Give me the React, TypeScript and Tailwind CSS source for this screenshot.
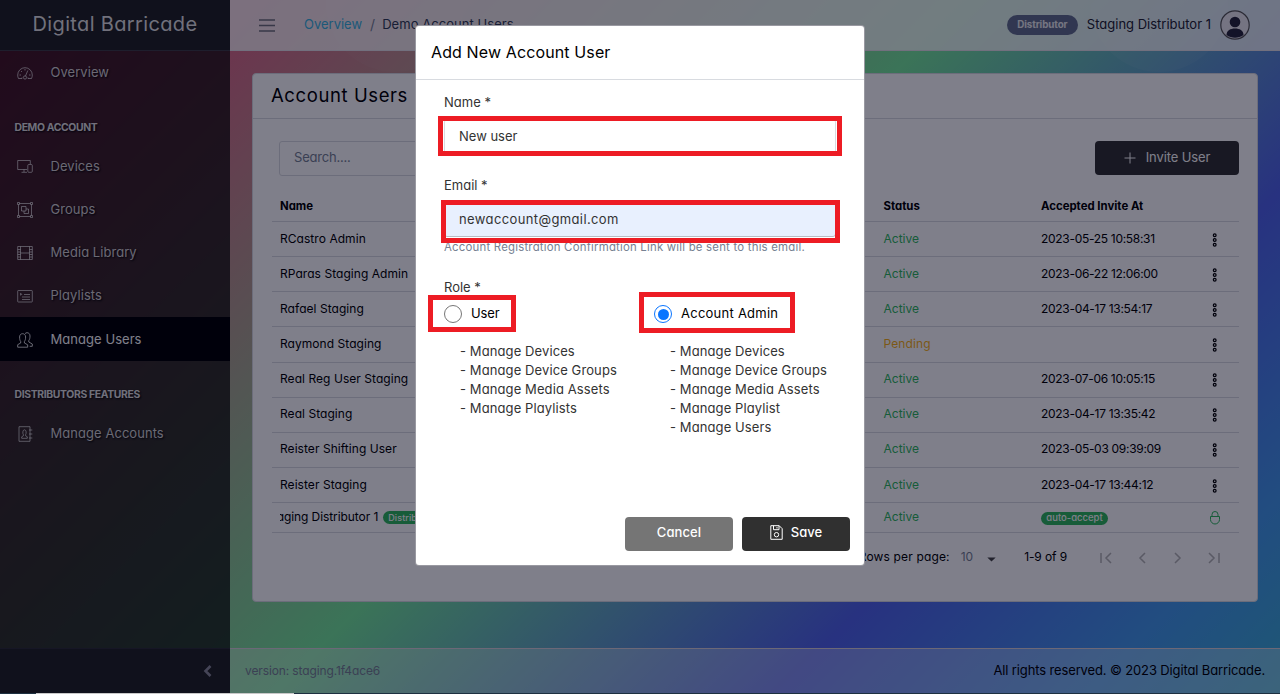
import React from "react";

type IconProps = { className?: string; children: React.ReactNode; box?: string };

function Icon({ className = "", children, box = "0 0 16 16" }: IconProps) {
  return (
    <svg viewBox={box} fill="none" stroke="currentColor" strokeWidth="1" className={className}>
      {children}
    </svg>
  );
}

const icons: Record<string, React.ReactNode> = {
  gauge: (
    <>
      <path d="M5 13.500H1.500A7.200 7.200 0 0 1 .7 10 7.300 7.300 0 0 1 15.300 10a7.200 7.200 0 0 1-.8 3.500H11" />
      <circle cx="8" cy="12.500" r="1.600" />
      <path d="M8.500 11 10.800 5.500M8 4v1.500M4 6l1 1M2.500 10H4M12 10h1.500M5 13.500v-1M11 13.500v-1" />
    </>
  ),
  devices: (
    <>
      <path d="M10 10.500H.7V1.500h12.600V5M7 10.500v2.500M4.500 13.300H10" />
      <rect x="10.800" y="5.500" width="4.500" height="7.800" rx="1" />
    </>
  ),
  group: (
    <>
      <path d="M2.500 1.500h11M2.500 14.500h11M1.500 2.500v11M14.500 2.500v11" />
      <path d="M.5.5h2v2h-2zM13.500.5h2v2h-2zM.5 13.500h2v2h-2zM13.500 13.500h2v2h-2z" />
      <path d="M4.500 4.500h4.500v4.500H4.500zM9 7h2.500v4.500H7V9" />
    </>
  ),
  film: (
    <>
      <path d="M.7 1.500h14.600v13H.7zM3.500 1.500v13M12.500 1.500v13M3.500 8h9" />
      <path d="M.7 4.500h2.800M.7 7h2.800M.7 9.500h2.800M.7 12h2.800M12.500 4.500h2.800M12.500 7h2.800M12.500 9.500h2.800M12.500 12h2.800" />
    </>
  ),
  playlist: (
    <>
      <rect x=".7" y="2.500" width="14.600" height="11.500" rx=".6" />
      <path d="M3 4.800 5.500 6.300 3 7.800z" fill="currentColor" stroke="none" />
      <path d="M7 6.500h6M5 9h8M5 11.500h8" />
    </>
  ),
  people: (
    <>
      <path d="M.7 15.200v-2.500l3-1.700V9.500C2.800 8.300 2.600 7 2.600 5c0-2 1.200-3.300 3-3.300s3 1.300 3 3.300c0 2-.3 3.300-1.200 4.500V11l3.300 1.800v2.400z" />
      <path d="M8 1.700C8.600 1 9.300.7 10 .7c1.800 0 3 1.300 3 3.300s-.3 3.300-1.200 4.500V10l3.500 2v2.300h-2.600" />
    </>
  ),
  address: (
    <>
      <path d="M2 .7h11v14.600H2zM12 4h3.300M12 8h3.300M12 12h3.300" />
      <path d="M4.700 12.300v-1.500l1.700-1V8.700C5.500 7.500 5.500 3.800 7.500 3.800s2 3.700 1.100 4.900v1.100l1.700 1v1.500z" />
    </>
  ),
};

function NavItem({ icon, label, active = false }: { icon: string; label: string; active?: boolean }) {
  return (
    <li
      className={
        active
          ? "flex h-[44px] items-center bg-black pl-[17px] pt-px text-white"
          : "flex h-[43.200px] items-center pl-[17px] text-[#ffffffd0]"
      }
    >
      <Icon
        className={active ? "mr-[17.500px] h-4 w-4 text-[#ffffffd0]" : "mr-[17.500px] mt-px h-4 w-4 text-[#ffffffa0]"}
      >
        {icons[icon]}
      </Icon>
      <span className="tracking-[0.05px] [text-shadow:1px_1px_2px_#000]">{label}</span>
    </li>
  );
}

function NavTitle({ label }: { label: string }) {
  return (
    <li className="flex h-[50.500px] items-center pl-[14.500px] pt-[16px] text-[10.400px] font-bold tracking-[-0.35px] text-[#ffffffe0] [text-shadow:1px_1px_2px_#000]">
      {label}
    </li>
  );
}

type Row = { name: string; status: string; date: string };

const rows: Row[] = [
  { name: "RCastro Admin", status: "Active", date: "2023-05-25 10:58:31" },
  { name: "RParas Staging Admin", status: "Active", date: "2023-06-22 12:06:00" },
  { name: "Rafael Staging", status: "Active", date: "2023-04-17 13:54:17" },
  { name: "Raymond Staging", status: "Pending", date: "" },
  { name: "Real Reg User Staging", status: "Active", date: "2023-07-06 10:05:15" },
  { name: "Real Staging", status: "Active", date: "2023-04-17 13:35:42" },
  { name: "Reister Shifting User", status: "Active", date: "2023-05-03 09:39:09" },
  { name: "Reister Staging", status: "Active", date: "2023-04-17 13:44:12" },
];

const grid = "grid grid-cols-[603.500px_157.500px_143px_1fr] items-center border-b border-[#d8dbe0] pl-2";

function Dots() {
  return (
    <Icon className="h-[14px] w-5 text-black" box="0 0 20 14">
      <g strokeWidth="1.200">
        <circle cx="9.700" cy="2.200" r="1.400" />
        <circle cx="9.700" cy="7" r="1.400" />
        <circle cx="9.700" cy="11.800" r="1.400" />
      </g>
    </Icon>
  );
}

function UsersCard() {
  return (
    <section className="mx-[22px] mt-[22px] h-[529px] rounded border border-[#d8dbe0] bg-white">
      <h1 className="flex h-[45px] items-center border-b border-[#d8dbe0] pl-[18px] text-[18.500px] tracking-[0.6px] text-black">
        Account Users
      </h1>
      <div className="flex justify-between pl-[26px] pr-[18px] pt-[22px]">
        <div className="flex h-[35px] w-[260px] items-center rounded-[3px] border border-[#d8dbe0] pb-px pl-[14px] tracking-[-0.2px] text-[#768192]">
          Search....
        </div>
        <button className="flex h-[34px] w-[144px] items-center justify-center rounded bg-[#303030] text-[13px] tracking-[-0.1px] text-white">
          <Icon className="mr-[10px] h-3 w-3" box="0 0 12 12">
            <path d="M6 .5v11M.5 6h11" />
          </Icon>
          Invite User
        </button>
      </div>
      <div className="ml-[19px] mr-[18px] mt-[15px] text-[12px] text-black">
        <div className={`${grid} h-[31px] pt-[2px] text-[11.400px] font-bold`}>
          <span>Name</span>
          <span>Status</span>
          <span>Accepted Invite At</span>
        </div>
        {rows.map((r) => (
          <div key={r.name} className={`${grid} h-[35.150px] pb-px`}>
            <span className="tracking-[0.05px]">{r.name}</span>
            <span className={r.status === "Active" ? "text-[#2eb85c]" : "tracking-[0.1px] text-[#f9b115]"}>
              {r.status}
            </span>
            <span className="tracking-[-0.3px]">{r.date}</span>
            <span className="pl-[21px] pt-[2px]">
              <Dots />
            </span>
          </div>
        ))}
        <div className={`${grid} h-[30px] pb-px`}>
          <span className="flex w-[145px] items-center justify-center overflow-hidden whitespace-nowrap">
            <span className="mr-[5px] shrink-0 tracking-[-0.08px]">Staging Distributor 1</span>
            <span className="shrink-0 rounded-full bg-[#2eb85c] px-[5px] text-[9px] font-medium leading-[13px] tracking-[0.1px] text-white">
              Distributor
            </span>
          </span>
          <span className="text-[#2eb85c]">Active</span>
          <span className="flex pt-[3px]">
            <span className="h-[13px] w-[67px] rounded-full bg-[#2eb85c] text-center text-[9.500px] font-medium leading-[12px] text-white">
              auto-accept
            </span>
          </span>
          <span className="pl-[23.500px] pt-[2px]">
            <Icon className="h-[14px] w-[14px] text-[#2eb85c]" box="0 0 14 14">
              <path d="M2.500 5.500h9v3a4.500 4.500 0 0 1-9 0zM4 5.500V3.500a3 3 0 0 1 6 0v2" />
            </Icon>
          </span>
        </div>
        <div className="flex h-[48px] items-center justify-end pr-[19px]">
          <span className="tracking-[0.15px]">Rows per page:</span>
          <span className="ml-[11px] text-[#768192]">10</span>
          <Icon className="ml-[14px] mt-1 h-[5px] w-[9px]" box="0 0 10 6">
            <path d="M0 .5h10L5 5.500z" fill="#444" stroke="none" />
          </Icon>
          <span className="ml-[28px] tracking-[-0.1px]">1-9 of 9</span>
          <Icon className="ml-[33px] mt-[2px] h-3 w-[120px] text-[#b4b4b4]" box="0 0 120 12">
            <g strokeWidth="1.500">
              <path d="M1 1v10M11 1 6 6l5 5M45 1l-5 5 5 5M75 1l5 5-5 5M109 1l5 5-5 5M119 1v10" />
            </g>
          </Icon>
        </div>
      </div>
    </section>
  );
}

function RoleColumn({ name, checked, abilities }: { name: string; checked: boolean; abilities: string[] }) {
  return (
    <div className="w-[210px] shrink-0">
      <div className="flex h-[18px] items-center">
        <span
          className={
            checked
              ? "flex h-[18px] w-[18px] items-center justify-center rounded-full border border-[#0a75ff]"
              : "h-[18px] w-[18px] rounded-full border border-[#767676]"
          }
        >
          {checked && <span className="h-[11px] w-[11px] rounded-full bg-[#0a75ff]" />}
        </span>
        <span className={checked ? "ml-[9px] tracking-[0.25px] text-black" : "ml-[9px] tracking-[-0.1px] text-black"}>
          {name}
        </span>
      </div>
      <ul className="pl-4 pt-[19px] leading-[19px] tracking-[0.1px]">
        {abilities.map((a) => (
          <li key={a}>- {a}</li>
        ))}
      </ul>
    </div>
  );
}

function Modal() {
  return (
    <div className="absolute left-[415px] top-[25px] h-[541px] w-[450px] rounded border border-[#00001566] bg-white text-[13px] text-[#333]">
      <h2 className="flex h-[54px] items-center border-b border-[#d8dbe0] pb-[2px] pl-[15px] text-[16px] tracking-[0.12px] text-black">
        Add New Account User
      </h2>
      <div className="px-7">
        <label className="block pt-[12px] leading-5">Name *</label>
        <div className="mt-[7px] flex h-[35px] items-center rounded-[3px] border border-[#d8dbe0] pl-[14px]">New user</div>
        <label className="block pt-[21px] leading-5">Email *</label>
        <div className="mt-[7px] flex h-[35px] items-center rounded-[3px] border border-[#b8bcc4] bg-[#e8f0fe] pl-[14px] tracking-[0.38px]">
          newaccount@gmail.com
        </div>
        <p className="pt-px text-[11.400px] leading-[18px] tracking-[0.21px] text-[#768192]">
          Account Registration Confirmation Link will be sent to this email.
        </p>
        <label className="block pt-[21px] leading-5">Role *</label>
        <div className="mt-[8px] flex">
          <RoleColumn
            name="User"
            checked={false}
            abilities={["Manage Devices", "Manage Device Groups", "Manage Media Assets", "Manage Playlists"]}
          />
          <RoleColumn
            name="Account Admin"
            checked
            abilities={[
              "Manage Devices",
              "Manage Device Groups",
              "Manage Media Assets",
              "Manage Playlist",
              "Manage Users",
            ]}
          />
        </div>
      </div>
      <div className="absolute bottom-[14px] right-[14px] flex gap-[9px] font-medium text-white">
        <button className="h-[34px] w-[108px] rounded bg-[#757575] pb-[3px] tracking-[0.1px]">Cancel</button>
        <button className="flex h-[34px] w-[108px] items-center justify-center rounded bg-[#303030] pb-[3px]">
          <Icon className="mr-2 h-[15px] w-[13px]" box="0 0 13 15">
            <path d="M.8.7h8.400l3 3v10.600H.8zM3.500.7v4h5.500v-4M7 2v1.500" />
            <circle cx="6.500" cy="9.700" r="2.200" />
          </Icon>
          Save
        </button>
      </div>
      <div className="absolute left-[22px] top-[90px] h-10 w-[404px] border-[5px] border-[#ed1c24]" />
      <div className="absolute left-[25px] top-[174px] h-[43px] w-[399px] border-[5px] border-[#ed1c24]" />
      <div className="absolute left-[12px] top-[269px] h-[37px] w-[88px] border-[5px] border-[#ed1c24]" />
      <div className="absolute left-[223px] top-[266px] h-[41px] w-[156px] border-[5px] border-[#ed1c24]" />
    </div>
  );
}

export default function App() {
  return (
    <div className="relative h-[694px] w-[1280px] overflow-hidden bg-[linear-gradient(135deg,#ff3a7f_0%,#76e89a_49%,#5064ea_74.500%,#449aeb_90%,#3cb0d4_100%)] font-['Inter','Liberation_Sans',sans-serif] text-[13px] [font-feature-settings:'cv11']">
      <div className="absolute left-[326px] top-[-66px] h-[138px] w-[138px] rounded-full bg-[#ffffff08]" />
      <div className="absolute left-[1090px] top-[-66px] h-[138px] w-[138px] rounded-full bg-[#ffffff0c]" />
      <div className="relative flex h-full">
        <aside className="flex w-[230px] flex-col bg-[#080804bf]">
          <div className="flex h-[51px] items-center justify-center border-b border-[#3c3c44] bg-[#202222] pb-[3px] text-[20px] tracking-[0.35px] text-[#ffffffe0]">
            Digital Barricade
          </div>
          <ul className="flex-1">
            <NavItem icon="gauge" label="Overview" />
            <NavTitle label="DEMO ACCOUNT" />
            <NavItem icon="devices" label="Devices" />
            <NavItem icon="group" label="Groups" />
            <NavItem icon="film" label="Media Library" />
            <NavItem icon="playlist" label="Playlists" />
            <NavItem icon="people" label="Manage Users" active />
            <NavTitle label="DISTRIBUTORS FEATURES" />
            <NavItem icon="address" label="Manage Accounts" />
          </ul>
          <div className="flex h-[46px] items-center justify-end border-t border-[#2c2c34] bg-[#202222] pb-[2px] pr-[18px]">
            <Icon className="h-3 w-[9px] text-[#8a8a98]" box="0 0 9 12">
              <path d="M7.500 1 2.500 6l5 5" strokeWidth="2.600" />
            </Icon>
          </div>
        </aside>
        <div className="flex w-[1050px] flex-col">
          <header className="flex h-[51px] items-center border-b border-[#e4e0e6] bg-[#ffffffcc] pl-[29px] pr-[30px]">
            <Icon className="mt-px h-[13px] w-4 text-[#70707a]" box="0 0 16 13">
              <path d="M0 1h16M0 6.500h16M0 12h16" strokeWidth="1.300" />
            </Icon>
            <nav className="ml-[29px] flex items-center">
              <span className="text-[#39b2dd]">Overview</span>
              <span className="mx-[8px] text-[14px] leading-none text-[#768192]">/</span>
              <span className="-ml-px tracking-[0.05px] text-[#303c54]">Demo Account Users</span>
            </nav>
            <span className="ml-auto h-5 w-[71px] rounded-full bg-[#636f8c] text-center text-[9.800px] font-bold leading-[19px] tracking-[-0.1px] text-[#ebedef]">
              Distributor
            </span>
            <span className="ml-[9px] text-[#222230]">Staging Distributor 1</span>
            <svg viewBox="0 0 30 30" className="ml-[9px] h-[30px] w-[30px]">
              <circle cx="15" cy="15" r="14.200" fill="#ebe8ee" stroke="#555" strokeWidth="1.200" />
              <circle cx="15" cy="12" r="5.300" fill="#26263a" />
              <path d="M6.500 25c0-4.500 4-6.500 8.500-6.500s8.500 2 8.500 6.500c-5 3.500-12 3.500-17 0z" fill="#26263a" />
            </svg>
          </header>
          <main className="flex-1">
            <UsersCard />
          </main>
          <footer className="flex h-[46px] items-center justify-between border-t border-[#d8d0d8] bg-[#ffffff4c] px-[15px] pb-px">
            <span className="text-[12px] tracking-[-0.12px] text-[#768192]">version: staging.1f4ace6</span>
            <span className="tracking-[-0.13px] text-black">All rights reserved. © 2023 Digital Barricade.</span>
          </footer>
        </div>
      </div>
      <div className="absolute inset-0 bg-[#00001580]" />
      <div className="absolute bottom-0 left-0 h-px w-full bg-[#1d3040]" />
      <div className="absolute bottom-0 left-9 h-px w-[258px] bg-[#c8c8c8]" />
      <Modal />
    </div>
  );
}
